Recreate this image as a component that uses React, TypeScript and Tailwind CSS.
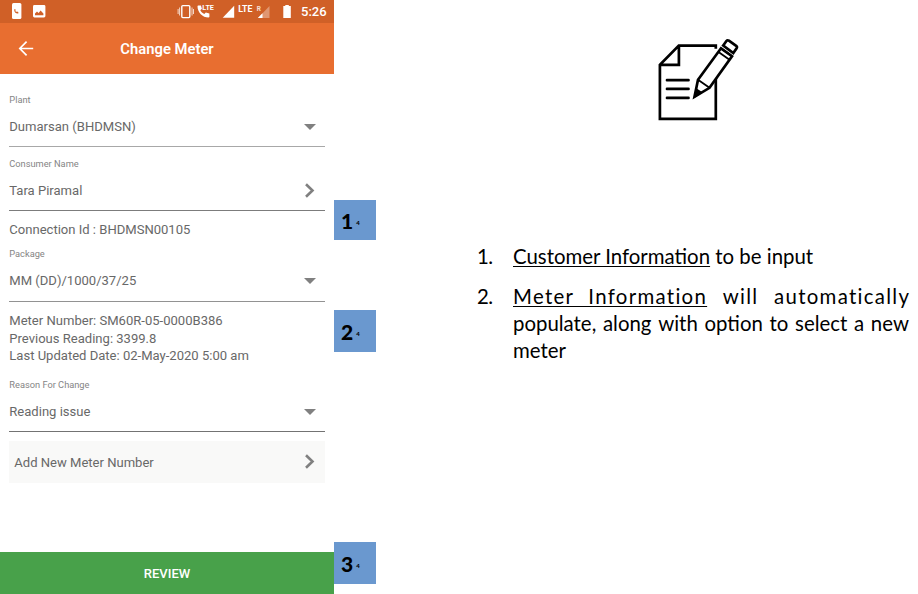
import type { ReactNode } from "react";

function DownArrow() {
  return (
    <svg className="mr-[9px] h-[6px] w-[12px]" viewBox="0 0 12 6">
      <path d="M0 0h12L6 6z" fill="#808080" />
    </svg>
  );
}

function RightArrow() {
  return (
    <svg className="mr-[9px] h-4 w-[12px]" viewBox="0 0 12 16">
      <path d="M2 1.200L8.500 7.500l-6.500 6.300" fill="none" stroke="#808080" strokeWidth="2.600" />
    </svg>
  );
}

function Field({ label, value, line, children }: { label: string; value: string; line: string; children: ReactNode }) {
  return (
    <div className={`border-b ${line}`}>
      <div className="h-5 text-[9.25px] leading-5 text-[#858585]">{label}</div>
      <div className="flex h-[34px] items-center justify-between text-[13.050px] text-[#686868]">
        <span>{value}</span>
        {children}
      </div>
    </div>
  );
}

function StatusBar() {
  return (
    <div className="h-[23px] bg-[#d06027]">
      <svg className="h-[23px] w-[334px]" viewBox="0 0 334 23" fill="#fff">
        <rect x="12" y="3" width="9.4" height="16" rx="1.5" />
        <path d="M14.3 9.2v1.6c.3 1.6 1.5 2.6 3.2 2.7h.8v-1.6l-1.5-.3-.6.4-.9-1 .3-.6-.3-1.3z" fill="#d06027" />
        <rect x="33" y="5" width="12.4" height="12.4" rx="1.4" />
        <path d="M35 15.3v-1.7l2-2 1.6 1.5 2-2.5 2.8 3v1.7z" fill="#d06027" />
        <rect x="181.8" y="5.6" width="8" height="12" rx="1" fill="none" stroke="#fff" strokeWidth="1.4" />
        <path d="M179.6 7.5v8M178.1 9v5M192 7.5v8M193.5 9v5" stroke="#fff" strokeWidth="1" opacity=".75" />
        <path d="M198.3 5.4h2.6l1 3.4-1.600 1.500c.9 1.800 2.200 3 4 3.800l1.500-1.500 3.600 1v3.200c0 .5-.4.800-.9.800-6 0-11-5.200-11-11.300 0-.5.300-.9.800-.9z" />
        <text x="202.300" y="10.200" fontSize="7.200" fontWeight="700" fontFamily="Roboto, sans-serif">LTE</text>
        <path d="M234.200 5.700v12h-11.500z" />
        <text x="238.200" y="11.700" fontSize="8.800" fontWeight="700" fontFamily="Roboto, sans-serif">LTE</text>
        <text x="256.800" y="10.800" fontSize="6.500" fontWeight="700" fontFamily="Roboto, sans-serif" opacity=".8">R</text>
        <path d="M269.500 6v12h-11.500z" opacity=".35" />
        <path d="M262.500 13.200v4.800h-4.700z" />
        <path d="M283.300 6h2V5h3.500v1h2v12h-7.500z" />
        <text x="301" y="16.300" fontSize="13" fontWeight="500" fontFamily="Roboto, sans-serif">5:26</text>
      </svg>
    </div>
  );
}

function Phone() {
  return (
    <div className="flex h-[594px] w-[334px] flex-col font-[Roboto,sans-serif] whitespace-nowrap">
      <StatusBar />
      <header className="flex h-[51px] items-center bg-[#e86e30] text-white">
        <svg className="ml-[18px] h-4 w-4" viewBox="0 0 16 16" fill="none" stroke="#fff" strokeWidth="1.700">
          <path d="M15.200 7.500H2M8.600 .7L1.800 7.500l6.800 6.800" />
        </svg>
        <h1 className="w-[266px] pt-px text-center text-[14.8px] font-semibold">Change Meter</h1>
      </header>
      <main className="pr-[9px] pl-[9.3px] pt-4 text-[13.050px] text-[#686868]">
        <Field label="Plant" value="Dumarsan (BHDMSN)" line="pb-[2px] border-[#a8a8a8]"><DownArrow /></Field>
        <div className="h-[7px]" />
        <Field label="Consumer Name" value="Tara Piramal" line="pb-[2px] border-[#7c7c7c]"><RightArrow /></Field>
        <div className="h-[33px] pt-[9px] leading-5">Connection Id : BHDMSN00105</div>
        <Field label="Package" value="MM (DD)/1000/37/25" line="pb-[3px] border-[#929292]"><DownArrow /></Field>
        <div className="h-[73px] pt-[10px] leading-[17.5px]">
          <p>Meter Number: SM60R-05-0000B386</p>
          <p>Previous Reading: 3399.8</p>
          <p>Last Updated Date: 02-May-2020 5:00 am</p>
        </div>
        <Field label="Reason For Change" value="Reading issue" line="pb-[2px] border-[#737373]"><DownArrow /></Field>
        <div className="mt-[9px] flex h-[42px] items-center justify-between bg-[#f9f9f8] pl-[5px]">
          <span className="pt-px">Add New Meter Number</span>
          <RightArrow />
        </div>
      </main>
      <button className="mt-auto h-[42px] w-full bg-[#48a14a] pt-px text-[13px] font-medium text-white">REVIEW</button>
    </div>
  );
}

function Badge({ n, size }: { n: string; size: string }) {
  return (
    <div className={`flex w-[42px] items-center bg-[#6a98cf] pl-[7px] font-[Lato,sans-serif] text-black ${size}`}>
      <span className="pt-px text-[21px] font-black">{n}</span>
      <span className="ml-[3px] pt-1 text-[6px] font-black">4</span>
    </div>
  );
}

function PaperIcon() {
  return (
    <svg className="ml-[280px] mt-[38px] h-[84px] w-[84px]" viewBox="0 0 84 84" fill="none" stroke="#000" strokeWidth="2.700">
      <path d="M60.200 10.500V7.400H23.200L4.300 26.600V80.700h55.900V38M4.300 26.600h19V7.500" transform="translate(-.4 .2)" />
      <path d="M11.200 42h21.500M11.200 50.700h21.500M11.200 59.700h21.500" strokeLinecap="round" transform="translate(-.2 .2)" />
      <path d="M65 10.300L76 18.200L53.500 49.800L38.500 58.800L42 41.800z" fill="#fff" />
      <path d="M65 10.300L76 18.200M62.500 14L73.500 21.700M42 41.800L53.500 49.800" strokeWidth="1.800" />
      <path d="M40.300 50.300l6.500 4.300-9.300 6z" fill="#000" stroke="none" />
      <path d="M67.200 7.500l3.200-4.500q1-1.200 2.500-.3l7.300 5.200q1.300 1 .4 2.400l-3.300 4.700z" />
    </svg>
  );
}

export default function App() {
  return (
    <div className="flex h-[594px] w-[918px] overflow-hidden bg-white">
      <Phone />
      <aside className="flex w-[42px] flex-col pt-[200px]">
        <Badge n="1" size="h-10" />
        <div className="h-[70px]" />
        <Badge n="2" size="h-[42px]" />
        <div className="h-[190px]" />
        <Badge n="3" size="h-[42px]" />
      </aside>
      <section className="w-[542px] font-[Lato,Carlito,sans-serif] text-[20.4px] leading-[27px] whitespace-nowrap text-black">
        <PaperIcon />
        <ol className="mt-[121px] pl-[101px]">
          <li className="flex">
            <span className="w-9 tracking-[-0.5px]">1.</span>
            <p><span className="underline decoration-1 underline-offset-2">Customer Information</span> to be input</p>
          </li>
          <li className="mt-[13px] flex">
            <span className="w-9 tracking-[-0.5px]">2.</span>
            <div className="w-[396px]">
              <p className="flex justify-between tracking-[1.3px]">
                <span className="underline decoration-1 underline-offset-2 [word-spacing:8px]">Meter Information</span>
                <span>will</span>
                <span className="-mr-[1.3px]">automatically</span>
              </p>
              <p className="flex justify-between">
                <span>populate,</span><span>along</span><span>with</span><span>option</span><span>to</span><span>select</span><span>a</span><span>new</span>
              </p>
              <p>meter</p>
            </div>
          </li>
        </ol>
      </section>
    </div>
  );
}
